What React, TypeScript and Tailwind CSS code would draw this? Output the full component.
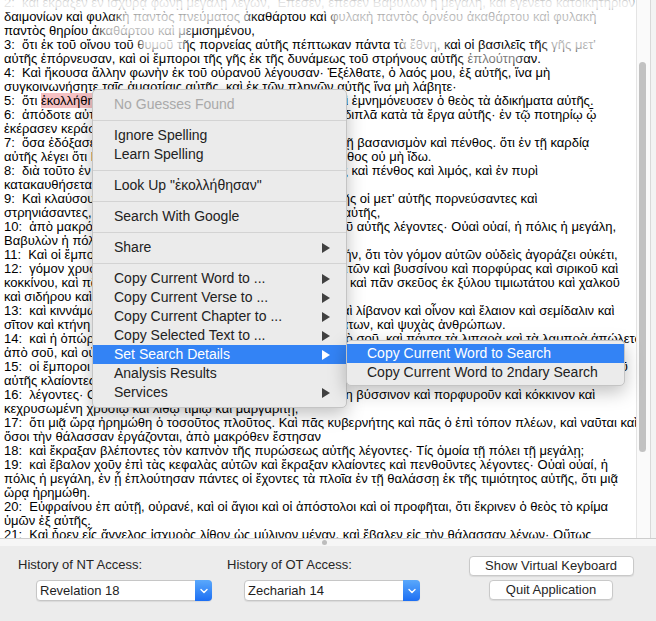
const textLines: string[] = [
  "2:  καὶ ἔκραξεν ἐν ἰσχυρᾷ φωνῇ μεγάλῃ λέγων, Ἔπεσεν, ἔπεσεν Βαβυλὼν ἡ μεγάλη, καὶ ἐγένετο κατοικητήριον",
  "δαιμονίων καὶ φυλακὴ παντὸς πνεύματος ἀκαθάρτου καὶ φυλακὴ παντὸς ὀρνέου ἀκαθάρτου καὶ φυλακὴ",
  "παντὸς θηρίου ἀκαθάρτου καὶ μεμισημένου,",
  "3:  ὅτι ἐκ τοῦ οἴνου τοῦ θυμοῦ τῆς πορνείας αὐτῆς πέπτωκαν πάντα τὰ ἔθνη, καὶ οἱ βασιλεῖς τῆς γῆς μετ'",
  "αὐτῆς ἐπόρνευσαν, καὶ οἱ ἔμποροι τῆς γῆς ἐκ τῆς δυνάμεως τοῦ στρήνους αὐτῆς ἐπλούτησαν.",
  "4:  Καὶ ἤκουσα ἄλλην φωνὴν ἐκ τοῦ οὐρανοῦ λέγουσαν· Ἐξέλθατε, ὁ λαός μου, ἐξ αὐτῆς, ἵνα μὴ",
  "συγκοινωνήσητε ταῖς ἁμαρτίαις αὐτῆς, καὶ ἐκ τῶν πληγῶν αὐτῆς ἵνα μὴ λάβητε·",
  "HIGHLIGHT",
  "6:  ἀπόδοτε αὐτῇ ὡς καὶ αὐτὴ ἀπέδωκεν, καὶ διπλώσατε τὰ διπλᾶ κατὰ τὰ ἔργα αὐτῆς· ἐν τῷ ποτηρίῳ ᾧ",
  "ἐκέρασεν κεράσατε αὐτῇ διπλοῦν,",
  "7:  ὅσα ἐδόξασεν αὐτὴν καὶ ἐστρηνίασεν, τοσοῦτον δότε αὐτῇ βασανισμὸν καὶ πένθος. ὅτι ἐν τῇ καρδίᾳ",
  "αὐτῆς λέγει ὅτι Κάθημαι βασίλισσα καὶ χήρα οὐκ εἰμὶ καὶ πένθος οὐ μὴ ἴδω.",
  "8:  διὰ τοῦτο ἐν μιᾷ ἡμέρᾳ ἥξουσιν αἱ πληγαὶ αὐτῆς, θάνατος καὶ πένθος καὶ λιμός, καὶ ἐν πυρὶ",
  "κατακαυθήσεται· ὅτι ἰσχυρὸς κύριος ὁ θεὸς ὁ κρίνας αὐτήν.",
  "9:  Καὶ κλαύσουσιν καὶ κόψονται ἐπ' αὐτὴν οἱ βασιλεῖς τῆς γῆς οἱ μετ' αὐτῆς πορνεύσαντες καὶ",
  "στρηνιάσαντες, ὅταν βλέπωσιν τὸν καπνὸν τῆς πυρώσεως αὐτῆς,",
  "10:  ἀπὸ μακρόθεν ἑστηκότες διὰ τὸν φόβον τοῦ βασανισμοῦ αὐτῆς λέγοντες· Οὐαὶ οὐαί, ἡ πόλις ἡ μεγάλη,",
  "Βαβυλὼν ἡ πόλις ἡ ἰσχυρά, ὅτι μιᾷ ὥρᾳ ἦλθεν ἡ κρίσις σου.",
  "11:  Καὶ οἱ ἔμποροι τῆς γῆς κλαίουσιν καὶ πενθοῦσιν ἐπ' αὐτήν, ὅτι τὸν γόμον αὐτῶν οὐδεὶς ἀγοράζει οὐκέτι,",
  "12:  γόμον χρυσοῦ καὶ ἀργύρου καὶ λίθου τιμίου καὶ μαργαριτῶν καὶ βυσσίνου καὶ πορφύρας καὶ σιρικοῦ καὶ",
  "κοκκίνου, καὶ πᾶν ξύλον θύϊνον καὶ πᾶν σκεῦος ἐλεφάντινον καὶ πᾶν σκεῦος ἐκ ξύλου τιμιωτάτου καὶ χαλκοῦ",
  "καὶ σιδήρου καὶ μαρμάρου,",
  "13:  καὶ κιννάμωμον καὶ ἄμωμον καὶ θυμιάματα καὶ μύρον καὶ λίβανον καὶ οἶνον καὶ ἔλαιον καὶ σεμίδαλιν καὶ",
  "σῖτον καὶ κτήνη καὶ πρόβατα, καὶ ἵππων καὶ ῥεδῶν καὶ σωμάτων, καὶ ψυχὰς ἀνθρώπων.",
  "14:  καὶ ἡ ὀπώρα σου τῆς ἐπιθυμίας τῆς ψυχῆς ἀπῆλθεν ἀπὸ σοῦ, καὶ πάντα τὰ λιπαρὰ καὶ τὰ λαμπρὰ ἀπώλετο",
  "ἀπὸ σοῦ, καὶ οὐκέτι οὐ μὴ αὐτὰ εὑρήσουσιν.",
  "15:  οἱ ἔμποροι τούτων, οἱ πλουτήσαντες ἀπ' αὐτῆς, ἀπὸ μακρόθεν στήσονται διὰ τὸν φόβον τοῦ βασανισμοῦ",
  "αὐτῆς κλαίοντες καὶ πενθοῦντες,",
  "16:  λέγοντες· Οὐαὶ οὐαί, ἡ πόλις ἡ μεγάλη, ἡ περιβεβλημένη βύσσινον καὶ πορφυροῦν καὶ κόκκινον καὶ",
  "κεχρυσωμένη χρυσίῳ καὶ λίθῳ τιμίῳ καὶ μαργαρίτῃ,",
  "17:  ὅτι μιᾷ ὥρᾳ ἠρημώθη ὁ τοσοῦτος πλοῦτος. Καὶ πᾶς κυβερνήτης καὶ πᾶς ὁ ἐπὶ τόπον πλέων, καὶ ναῦται καὶ",
  "ὅσοι τὴν θάλασσαν ἐργάζονται, ἀπὸ μακρόθεν ἔστησαν",
  "18:  καὶ ἔκραξαν βλέποντες τὸν καπνὸν τῆς πυρώσεως αὐτῆς λέγοντες· Τίς ὁμοία τῇ πόλει τῇ μεγάλῃ;",
  "19:  καὶ ἔβαλον χοῦν ἐπὶ τὰς κεφαλὰς αὐτῶν καὶ ἔκραξαν κλαίοντες καὶ πενθοῦντες λέγοντες· Οὐαὶ οὐαί, ἡ",
  "πόλις ἡ μεγάλη, ἐν ᾗ ἐπλούτησαν πάντες οἱ ἔχοντες τὰ πλοῖα ἐν τῇ θαλάσσῃ ἐκ τῆς τιμιότητος αὐτῆς, ὅτι μιᾷ",
  "ὥρᾳ ἠρημώθη.",
  "20:  Εὐφραίνου ἐπ αὐτῇ, οὐρανέ, καὶ οἱ ἅγιοι καὶ οἱ ἀπόστολοι καὶ οἱ προφῆται, ὅτι ἔκρινεν ὁ θεὸς τὸ κρίμα",
  "ὑμῶν ἐξ αὐτῆς.",
  "21:  Καὶ ἦρεν εἷς ἄγγελος ἰσχυρὸς λίθον ὡς μύλινον μέγαν, καὶ ἔβαλεν εἰς τὴν θάλασσαν λέγων· Οὕτως",
];

type MenuEntry =
  | { kind: "item"; label: string; arrow?: boolean; disabled?: boolean; active?: boolean }
  | { kind: "sep" };

const menu: MenuEntry[] = [
  { kind: "item", label: "No Guesses Found", disabled: true },
  { kind: "sep" },
  { kind: "item", label: "Ignore Spelling" },
  { kind: "item", label: "Learn Spelling" },
  { kind: "sep" },
  { kind: "item", label: "Look Up \"ἐκολλήθησαν\"" },
  { kind: "sep" },
  { kind: "item", label: "Search With Google" },
  { kind: "sep" },
  { kind: "item", label: "Share", arrow: true },
  { kind: "sep" },
  { kind: "item", label: "Copy Current Word to ...", arrow: true },
  { kind: "item", label: "Copy Current Verse to ...", arrow: true },
  { kind: "item", label: "Copy Current Chapter to ...", arrow: true },
  { kind: "item", label: "Copy Selected Text to ...", arrow: true },
  { kind: "item", label: "Set Search Details", arrow: true, active: true },
  { kind: "item", label: "Analysis Results" },
  { kind: "item", label: "Services", arrow: true },
];

function Arrow({ white }: { white?: boolean }) {
  return (
    <svg width="8" height="10" viewBox="0 0 8 10">
      <path d="M0 0 L8 5 L0 10 Z" fill={white ? "#ffffff" : "#404040"} />
    </svg>
  );
}

function Combo({ value }: { value: string }) {
  return (
    <div className="flex h-[21px] w-[176px] rounded-[4px] border border-[#c6c6c6] bg-white shadow-[0_1px_1px_rgba(0,0,0,0.08)]">
      <div className="flex-1 pl-[3px] text-[13px] leading-[19px] text-[#1e1e1e]">{value}</div>
      <div className="-my-px -mr-px flex w-[17px] items-center justify-center rounded-r-[4px] bg-gradient-to-b from-[#5aa8fb] to-[#1c6ef3]">
        <svg width="8" height="6" viewBox="0 0 8 6">
          <path d="M1 1.5 L4 4.5 L7 1.5" stroke="#fff" strokeWidth="1.4" fill="none" strokeLinecap="round" strokeLinejoin="round" />
        </svg>
      </div>
    </div>
  );
}

export default function App() {
  return (
    <div className="relative h-[621px] w-[656px] overflow-hidden bg-[#ececec] font-['Liberation_Sans','Noto_Sans',sans-serif]">
      {/* text pane + scroller */}
      <div className="flex h-[538px]">
        <div className="relative w-[636px] overflow-hidden bg-white">
          <div className="-mt-[4px] pl-[4px] text-[13px] leading-[14px] whitespace-pre text-black">
            {textLines.map((l, i) =>
              l === "HIGHLIGHT" ? (
                <div key={i}>
                  5:  ὅτι <span className="bg-[#f5c1c3]">ἐκολλήθησαν</span> αὐτῆς αἱ ἁμαρτίαι ἄχρι τοῦ οὐρανοῦ, καὶ ἐμνημόνευσεν ὁ θεὸς τὰ ἀδικήματα αὐτῆς.
                </div>
              ) : (
                <div key={i}>{l}</div>
              )
            )}
          </div>
          {/* washed-out patches near the top edge */}
          <div className="absolute left-0 top-[-2px] h-[13px] w-full bg-white/90 blur-[2px]" />
          <div className="absolute left-[118px] top-[12px] h-[12px] w-[132px] rounded-full bg-white/90 blur-[4px]" />
          <div className="absolute left-[100px] top-[24px] h-[13px] w-[90px] rounded-full bg-white/85 blur-[4px]" />
          <div className="absolute left-[330px] top-[11px] h-[14px] w-[320px] rounded-full bg-white/85 blur-[4px]" />
          <div className="absolute left-[140px] top-[38px] h-[13px] w-[45px] rounded-full bg-white/85 blur-[3px]" />
          <div className="absolute left-[400px] top-[38px] h-[13px] w-[45px] rounded-full bg-white/85 blur-[3px]" />
          <div className="absolute left-[545px] top-[37px] h-[15px] w-[100px] rounded-full bg-white/80 blur-[4px]" />
          <div className="absolute left-[462px] top-[52px] h-[12px] w-[60px] rounded-full bg-white/60 blur-[4px]" />
        </div>
        <div className="w-[14px] border-l border-[#e4e4e4] bg-[#fafafa] pt-[62px]">
          <div className="ml-[2px] h-[390px] w-[7px] rounded-full bg-[#c2c2c2]" />
        </div>
        <div className="w-[6px] border-l border-[#d9d9d9] bg-[#f3f3f3]" />
      </div>

      {/* splitter */}
      <div className="flex h-[8px] items-center border-t border-[#cdcdcd] bg-[#f6f6f6]">
        <div className="ml-[322px] h-[5px] w-[5px] rounded-full bg-[#bdbdbd]" />
      </div>

      {/* bottom controls */}
      <div className="flex pl-[18px] text-[13px] text-[#262626]">
        <div className="w-[194px] pt-[11px]">
          <div className="leading-[16px]">History of NT Access:</div>
          <div className="ml-[18px] mt-[7px]">
            <Combo value="Revelation 18" />
          </div>
        </div>
        <div className="ml-[15px] w-[193px] pt-[11px]">
          <div className="leading-[16px]">History of OT Access:</div>
          <div className="ml-[17px] mt-[7px]">
            <Combo value="Zechariah 14" />
          </div>
        </div>
        <div className="ml-[48px] flex w-[166px] flex-col items-center gap-[4px] pt-[10px]">
          <div className="flex h-[20px] w-[165px] items-center justify-center rounded-[4px] border border-[#c9c9c9] bg-white shadow-[0_1px_1px_rgba(0,0,0,0.08)]">
            Show Virtual Keyboard
          </div>
          <div className="flex h-[20px] w-[124px] items-center justify-center rounded-[4px] border border-[#c9c9c9] bg-white shadow-[0_1px_1px_rgba(0,0,0,0.08)]">
            Quit Application
          </div>
        </div>
      </div>

      {/* context menu */}
      <div className="absolute left-[92px] top-[89px] w-[255px] rounded-[5px] border border-[#c4c4c4] bg-[#ebebeb] py-[5px] text-[14px] text-[#222] shadow-[0_6px_18px_rgba(0,0,0,0.25)]">
        {menu.map((m, i) =>
          m.kind === "sep" ? (
            <div key={i} className="flex h-[12px] items-center">
              <div className="h-px w-full bg-[#d3d3d3]" />
            </div>
          ) : (
            <div
              key={i}
              className={
                m.active
                  ? "flex h-[19px] items-center justify-between bg-[#3383f5] pl-[21px] pr-[16px] text-white"
                  : m.disabled
                  ? "flex h-[19px] items-center justify-between pl-[21px] pr-[16px] text-[#a9a9a9]"
                  : "flex h-[19px] items-center justify-between pl-[21px] pr-[16px]"
              }
            >
              <span>{m.label}</span>
              {m.arrow && <Arrow white={m.active} />}
            </div>
          )
        )}
      </div>

      {/* submenu */}
      <div className="absolute left-[346px] top-[340px] w-[279px] rounded-[5px] border border-[#c4c4c4] bg-[#ebebeb] py-[3px] text-[14px] text-[#222] shadow-[0_6px_18px_rgba(0,0,0,0.25)]">
        <div className="flex h-[19px] items-center bg-[#3383f5] pl-[20px] text-white">Copy Current Word to Search</div>
        <div className="flex h-[19px] items-center pl-[20px]">Copy Current Word to 2ndary Search</div>
      </div>
    </div>
  );
}
